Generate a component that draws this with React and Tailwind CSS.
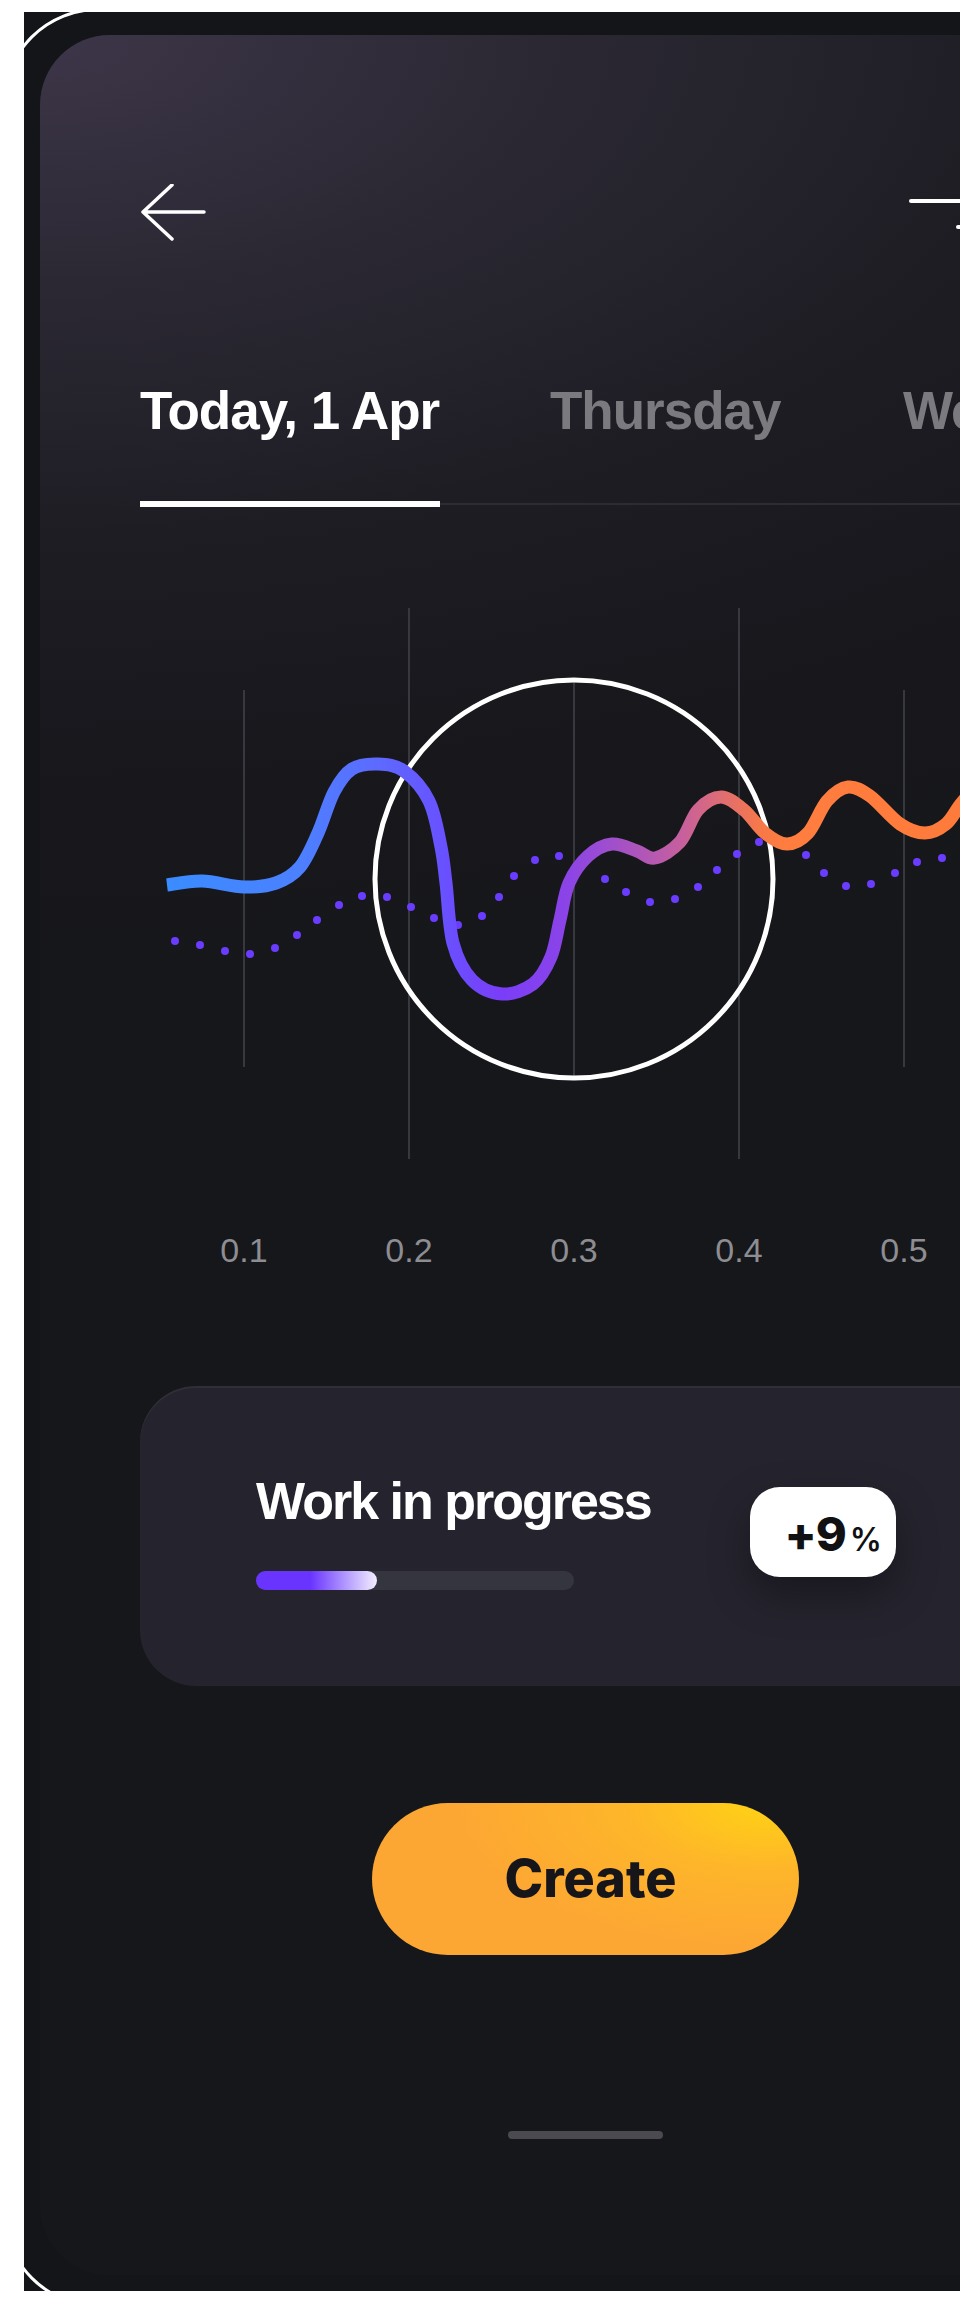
import React from "react";

const curve = [
  [167, 883], [202, 879], [244, 885], [276, 881], [300, 865], [318, 831], [334, 790],
  [352, 767], [378, 762], [404, 769], [429, 799], [441, 845], [446, 881], [453, 941],
  [472, 978], [502, 992], [533, 982], [551, 955], [560, 918], [569, 881], [588, 854],
  [612, 842], [637, 849], [655, 856], [680, 840], [698, 808], [721, 795], [744, 808],
  [765, 831], [787, 842], [808, 831], [827, 799], [848, 785], [870, 794], [900, 822],
  [925, 831], [946, 822], [960, 803], [975, 785],
];

const dots = [
  [175, 939], [200, 943], [225, 949], [250, 952], [275, 946], [297, 933], [317, 918],
  [339, 903], [362, 894], [387, 895], [411, 905], [434, 916], [458, 923], [482, 914],
  [499, 895], [514, 874], [535, 858], [559, 854], [582, 862], [605, 877], [626, 890],
  [650, 900], [675, 897], [698, 885], [717, 868], [737, 852], [759, 840], [782, 843],
  [806, 853], [824, 871], [846, 884], [871, 882], [895, 871], [917, 860], [942, 856],
];

function smooth(pts) {
  let d = `M${pts[0][0]},${pts[0][1]}`;
  for (let i = 0; i < pts.length - 1; i++) {
    const p0 = pts[i - 1] || pts[i];
    const p1 = pts[i];
    const p2 = pts[i + 1];
    const p3 = pts[i + 2] || p2;
    const c1x = p1[0] + (p2[0] - p0[0]) / 6;
    const c1y = p1[1] + (p2[1] - p0[1]) / 6;
    const c2x = p2[0] - (p3[0] - p1[0]) / 6;
    const c2y = p2[1] - (p3[1] - p1[1]) / 6;
    d += ` C${c1x.toFixed(1)},${c1y.toFixed(1)} ${c2x.toFixed(1)},${c2y.toFixed(1)} ${p2[0]},${p2[1]}`;
  }
  return d;
}

function Chart() {
  const grid = [
    [244, 688, 1065],
    [409, 606, 1157],
    [574, 680, 1074],
    [739, 606, 1157],
    [904, 688, 1065],
  ];
  return (
    <svg
      width="900"
      height="590"
      viewBox="140 590 900 590"
      className="block shrink-0 overflow-visible"
    >
      <defs>
        <linearGradient id="wave" gradientUnits="userSpaceOnUse" x1="167" y1="0" x2="960" y2="0">
          <stop offset="0" stopColor="#3a8cff" />
          <stop offset="0.168" stopColor="#4c80ff" />
          <stop offset="0.266" stopColor="#5d6aff" />
          <stop offset="0.352" stopColor="#6950ff" />
          <stop offset="0.422" stopColor="#7a3df8" />
          <stop offset="0.507" stopColor="#8c44e6" />
          <stop offset="0.561" stopColor="#a04fcc" />
          <stop offset="0.647" stopColor="#c55f9f" />
          <stop offset="0.699" stopColor="#df6d73" />
          <stop offset="0.748" stopColor="#f77848" />
          <stop offset="0.782" stopColor="#ff7d3f" />
          <stop offset="1" stopColor="#ff7b3b" />
        </linearGradient>
      </defs>
      {grid.map(([x, y1, y2]) => (
        <line key={x} x1={x} y1={y1} x2={x} y2={y2} stroke="#3c3d43" strokeWidth="1.8" />
      ))}
      <circle cx="574" cy="877" r="199" fill="none" stroke="#ffffff" strokeWidth="5" />
      {dots.map(([x, y]) => (
        <circle key={x} cx={x} cy={y} r="4" fill="#6a3cff" />
      ))}
      <path d={smooth(curve)} fill="none" stroke="url(#wave)" strokeWidth="13" strokeLinecap="butt" strokeLinejoin="round" />
    </svg>
  );
}

export default function App() {
  const labels = ["0.1", "0.2", "0.3", "0.4", "0.5"];
  return (
    <div className="relative w-[960px] h-[2318px] bg-white overflow-hidden pt-[12px] pl-[24px]">
      <div className="relative w-[1124px] h-[2279px] bg-[#141518] overflow-hidden pt-[23px] pl-[16px]">
        <div className="w-[1090px] h-[2240px] rounded-[70px] bg-[radial-gradient(2000px_1000px_at_0%_0%,#3d3649_0%,#2b2833_25%,#1e1d24_50%,#17171c_75%,#16171b_100%)] pl-[100px] pt-[149px] flex flex-col">
          {/* header */}
          <div className="flex h-[58px] shrink-0">
            <svg width="66" height="58" viewBox="0 0 66 58" className="block shrink-0">
              <path d="M64 28 H3 M32 1 L3 28 L32 55" fill="none" stroke="#ffffff" strokeWidth="3.5" strokeLinecap="round" strokeLinejoin="round" />
            </svg>
            <svg width="80" height="58" viewBox="0 0 80 58" className="block shrink-0 ml-[699px]">
              <line x1="6" y1="17" x2="80" y2="17" stroke="#ffffff" strokeWidth="4" strokeLinecap="round" />
              <line x1="53" y1="43" x2="80" y2="43" stroke="#ffffff" strokeWidth="4" strokeLinecap="round" />
            </svg>
          </div>

          {/* tabs */}
          <div className="mt-[142px] flex h-[53px] font-['Liberation_Sans',Arial,sans-serif] font-bold text-[53px] leading-none tracking-[-1px] whitespace-nowrap">
            <div className="w-[300px] shrink-0 text-white">Today, 1 Apr</div>
            <div className="w-[240px] shrink-0 ml-[110px] text-[#7a7a7f]">Thursday</div>
            <div className="shrink-0 ml-[113px] text-[#7a7a7f]">Wednesday</div>
          </div>
          <div className="relative mt-[64px] h-[6px] w-[990px] shrink-0">
            <div className="absolute left-0 right-0 top-[2px] h-[2px] bg-[#2c2d32]" />
            <div className="absolute left-0 top-0 h-[6px] w-[300px] bg-white" />
          </div>

          {/* chart */}
          <div className="mt-[85px]">
            <Chart />
          </div>
          <div className="mt-[51px] ml-[21.5px] flex h-[34px] font-['Liberation_Sans',Arial,sans-serif] text-[34px] leading-none text-[#8d8d92]">
            {labels.map((l) => (
              <div key={l} className="w-[165px] shrink-0 text-center">{l}</div>
            ))}
          </div>

          {/* progress card */}
          <div className="mt-[119px] h-[300px] w-[1000px] shrink-0 rounded-[56px] bg-[#25242e] shadow-[inset_0_2px_0_rgba(255,255,255,0.05)] flex items-start pt-[89px] pl-[116px]">
            <div className="w-[400px] shrink-0 flex flex-col">
              <div className="font-['Liberation_Sans',Arial,sans-serif] font-bold text-[52px] leading-none tracking-[-2px] text-white whitespace-nowrap">
                Work in progress
              </div>
              <div className="mt-[44px] h-[19px] w-[318px] rounded-full bg-[#35353f]">
                <div className="h-[19px] w-[121px] rounded-full bg-[linear-gradient(90deg,#6a34ff_0%,#6a34ff_45%,#b49cff_75%,#f3eeff_100%)]" />
              </div>
            </div>
            <div className="ml-[94px] mt-[12px] h-[90px] w-[146px] shrink-0 rounded-[30px] bg-white shadow-[0_18px_40px_rgba(0,0,0,0.35)] flex items-center justify-end pr-[14px] pt-[3px] font-['Inter',sans-serif] text-[#111114]">
              <div className="flex items-baseline leading-none">
                <span className="text-[47px] font-extrabold tracking-[-1px]">+9</span>
                <span className="ml-[4px] text-[32px] font-semibold">%</span>
              </div>
            </div>
          </div>

          {/* button */}
          <div className="ml-[232px] mt-[117px] h-[152px] w-[427px] shrink-0 rounded-full bg-[radial-gradient(320px_150px_at_92%_0%,#ffd215_0%,#feb52a_45%,#fca634_100%)] flex items-center justify-center">
            <span className="font-['Inter',sans-serif] font-extrabold text-[52px] leading-none text-[#16161a] pl-[10px]">Create</span>
          </div>

          {/* home indicator */}
          <div className="ml-[368px] mt-[176px] h-[8px] w-[155px] shrink-0 rounded-full bg-[#4a4a50]" />
        </div>

        {/* outer device outline */}
        <div className="pointer-events-none absolute left-[-21px] top-[-4px] bottom-[-16px] w-[1300px] rounded-[95px] border-[3px] border-white" />
      </div>
    </div>
  );
}
